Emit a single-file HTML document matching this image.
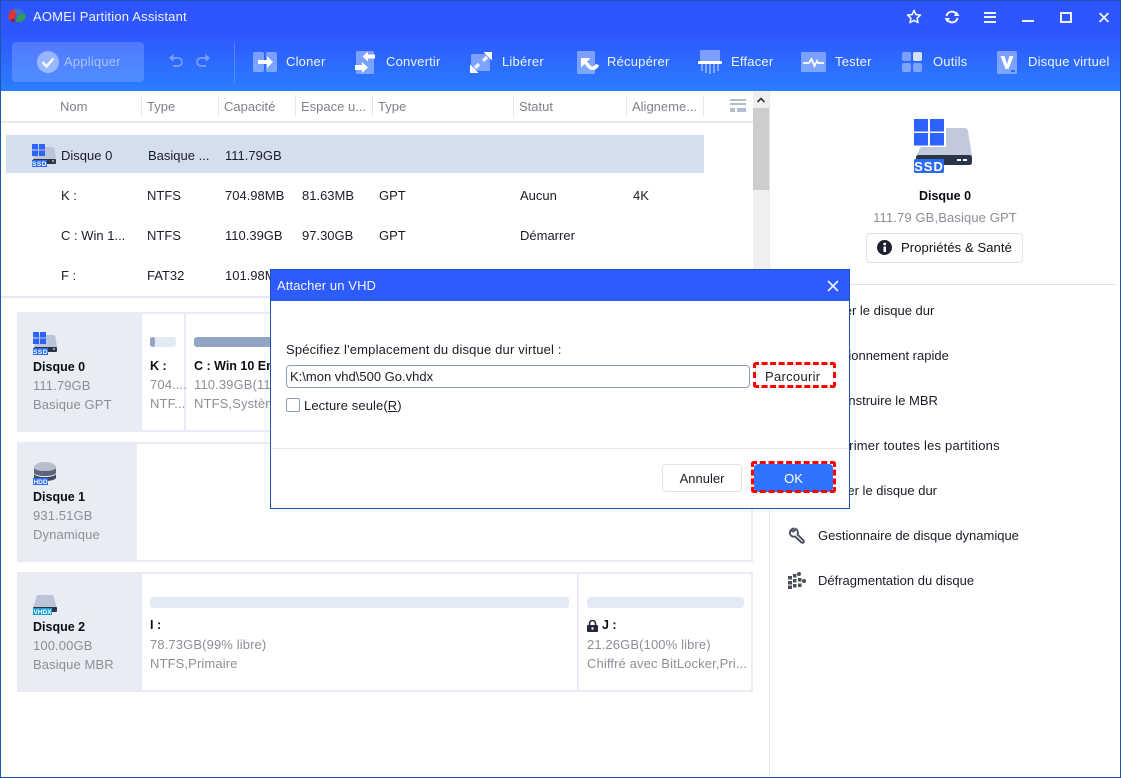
<!DOCTYPE html>
<html><head><meta charset="utf-8"><title>AOMEI Partition Assistant</title>
<style>
html,body{margin:0;padding:0;background:#fff}
#w{position:relative;width:1121px;height:778px;overflow:hidden;background:#fff;font-family:"Liberation Sans",sans-serif;font-size:13px;letter-spacing:0;color:#1c1c28}
#w div,#w svg{position:absolute}
.t{white-space:nowrap;line-height:16px;height:16px}
.h{color:#80808a}
.g{color:#8e8e98;letter-spacing:.12px}
.b{font-weight:bold;color:#0c0c16;font-size:12.5px}
.w{color:#eef3ff;letter-spacing:.2px}
.l{width:1px;top:95px;height:22px;background:#e1e7ef}
</style></head><body><div id="w">

<div style="left:0;top:0;width:1121px;height:91px;background:linear-gradient(#2e54ff 0,#2e56ff 35%,#2b7dff 100%)"></div>
<svg style="left:6px;top:6px" width="22" height="20" viewBox="0 0 22 20"><path d="M2 12C2 6 6 3 9 3l2 5-3 6H3z" fill="#d0383c"/><path d="M8 3c4-1 8 0 10 4l-6 3-2-3z" fill="#3a78c8"/><path d="M11 10l8-3c1 3 1 4 0 6l-4 3H10z" fill="#2f9a5c"/><path d="M4 13h5v3H6z" fill="#8a2a2c"/></svg>
<div class="t w" style="left:33px;top:9px">AOMEI Partition Assistant</div>

<!-- window buttons -->
<svg style="left:906px;top:9px" width="16" height="16" viewBox="0 0 16 16"><path d="M8 1.500l1.900 4.100 4.500.5-3.300 3 .9 4.500L8 11.400l-4 2.200.9-4.500-3.300-3 4.500-.5z" fill="none" stroke="#f0f4ff" stroke-width="1.600" stroke-linejoin="round"/></svg>
<svg style="left:944px;top:9px" width="16" height="16" viewBox="0 0 16 16"><path d="M2.500 7A5.500 5.500 0 0 1 12 4.500M13.500 9A5.500 5.500 0 0 1 4 11.500" fill="none" stroke="#f0f4ff" stroke-width="2"/><path d="M10 7h5.500l-2.700-4.500zM6 9H.5l2.700 4.500z" fill="#f0f4ff"/></svg>
<div style="left:984px;top:12px;width:12px;height:2px;background:#eef3ff"></div>
<div style="left:984px;top:16px;width:12px;height:2px;background:#eef3ff"></div>
<div style="left:984px;top:21px;width:12px;height:2px;background:#eef3ff"></div>
<div style="left:1022px;top:20px;width:12px;height:2px;background:#eef3ff"></div>
<div style="left:1060px;top:12px;width:8px;height:7px;border:2px solid #eef3ff"></div>
<svg style="left:1098px;top:12px" width="12" height="11" viewBox="0 0 12 11"><path d="M1.500 1l9 9M10.500 1l-9 9" stroke="#eef3ff" stroke-width="1.800"/></svg>

<!-- toolbar -->
<div style="left:12px;top:42px;width:132px;height:40px;border-radius:4px;background:rgba(255,255,255,.17)"></div>
<svg style="left:37px;top:51px" width="22" height="22" viewBox="0 0 22 22"><circle cx="11" cy="11" r="11" fill="#fff" fill-opacity=".42"/><path d="M5.500 11l4 4.500 7-8" fill="none" stroke="#fff" stroke-opacity=".85" stroke-width="2.600"/></svg>
<div class="t" style="left:64px;top:54px;color:#a9c2ff;letter-spacing:.2px">Appliquer</div>
<svg style="left:168px;top:54px" width="16" height="15" viewBox="0 0 16 15"><path d="M4 4h6a4 4 0 0 1 0 8H5" fill="none" stroke="#7ba0ff" stroke-width="1.700"/><path d="M5.500 0L1 4l4.500 4z" fill="#7ba0ff"/></svg>
<svg style="left:195px;top:54px" width="16" height="15" viewBox="0 0 16 15"><path d="M12 4H6a4 4 0 0 0 0 8h5" fill="none" stroke="#7ba0ff" stroke-width="1.700"/><path d="M10.500 0L15 4l-4.500 4z" fill="#7ba0ff"/></svg>
<div style="left:234px;top:42px;width:1px;height:40px;background:rgba(255,255,255,.2)"></div>

<svg style="left:253px;top:52px" width="24" height="20" viewBox="0 0 24 20"><rect width="11" height="20" rx="2" fill="#fff" fill-opacity=".38"/><rect x="13" width="11" height="20" rx="2" fill="#fff" fill-opacity=".38"/><path d="M5 8h9V4l6 6-6 6v-4H5z" fill="#fff"/></svg>
<div class="t w" style="left:286px;top:54px">Cloner</div>

<svg style="left:355px;top:51px" width="20" height="23" viewBox="0 0 20 23"><rect x="1" width="18" height="23" rx="1.500" fill="#fff" fill-opacity=".38"/><path d="M20 3.500h-7V.5L7.500 5.500l5.500 5v-3h7zM0 14h7v-3l6 5.500L7 22v-3H0z" fill="#fff"/></svg>
<div class="t w" style="left:386px;top:54px">Convertir</div>

<svg style="left:470px;top:52px" width="22" height="21" viewBox="0 0 22 21"><rect x="1" y="2" width="19" height="17" rx="1.500" fill="#fff" fill-opacity=".38"/><path d="M22 0v8.500L13.500 0zM0 21v-8.500L8.500 21z" fill="#fff"/><path d="M17 5l-4 4M5 16l4-4" stroke="#fff" stroke-width="3.500" stroke-opacity=".85"/></svg>
<div class="t w" style="left:502px;top:54px">Libérer</div>

<svg style="left:577px;top:51px" width="22" height="23" viewBox="0 0 22 23"><rect width="18" height="23" rx="1.500" fill="#fff" fill-opacity=".38"/><path d="M4 7h9.500L4 16.500z" fill="#fff"/><path d="M8 11l5 5.500c2 1.500 6 1 7.500-3" fill="none" stroke="#fff" stroke-width="3.500"/></svg>
<div class="t w" style="left:607px;top:54px">Récupérer</div>

<svg style="left:698px;top:50px" width="24" height="24" viewBox="0 0 24 24"><rect x="2" width="20" height="12" rx="1" fill="#fff" fill-opacity=".38"/><rect y="11" width="24" height="3" rx="1" fill="#fff"/><path d="M3 14h2v7H3zM7 14h2v9H7zM11 14h2v10h-2zM15 14h2v9h-2zM19 14h2v7h-2z" fill="#fff" fill-opacity=".4"/></svg>
<div class="t w" style="left:731px;top:54px">Effacer</div>

<svg style="left:801px;top:52px" width="25" height="20" viewBox="0 0 25 20"><rect width="25" height="20" rx="1.500" fill="#fff" fill-opacity=".38"/><path d="M2 11h6l2.500-4 3 7 2.500-5 1 2h6" fill="none" stroke="#fff" stroke-width="1.800"/></svg>
<div class="t w" style="left:835px;top:54px">Tester</div>

<svg style="left:902px;top:52px" width="20" height="20" viewBox="0 0 20 20"><rect width="9" height="9" rx="2" fill="#fff" fill-opacity=".38"/><rect x="11" width="9" height="9" rx="2" fill="#fff" fill-opacity=".8"/><rect y="11" width="9" height="9" rx="2" fill="#fff" fill-opacity=".38"/><rect x="11" y="11" width="9" height="9" rx="2" fill="#fff" fill-opacity=".38"/></svg>
<div class="t w" style="left:933px;top:54px">Outils</div>

<svg style="left:997px;top:51px" width="20" height="23" viewBox="0 0 20 23"><rect width="20" height="23" rx="1.500" fill="#fff" fill-opacity=".38"/><path d="M3.500 5h4l2.500 8 2.500-8h4L11.500 18h-3z" fill="#fff"/><rect x="14" y="19" width="4" height="2" fill="#2b6cff"/></svg>
<div class="t w" style="left:1028px;top:54px">Disque virtuel</div>

<!-- table header -->
<div class="t h" style="left:60px;top:99px">Nom</div>
<div class="t h" style="left:147px;top:99px">Type</div>
<div class="t h" style="left:224px;top:99px">Capacité</div>
<div class="t h" style="left:301px;top:99px">Espace u...</div>
<div class="t h" style="left:378px;top:99px">Type</div>
<div class="t h" style="left:519px;top:99px">Statut</div>
<div class="t h" style="left:632px;top:99px">Aligneme...</div>
<div class="l" style="left:141px"></div><div class="l" style="left:218px"></div><div class="l" style="left:295px"></div><div class="l" style="left:372px"></div><div class="l" style="left:513px"></div><div class="l" style="left:626px"></div><div class="l" style="left:703px"></div>
<div style="left:730px;top:99px;width:16px;height:2px;background:#b5bcc8"></div>
<div style="left:730px;top:103px;width:16px;height:2px;background:#b5bcc8"></div>
<div style="left:730px;top:108px;width:5px;height:4px;background:#b5bcc8"></div>
<div style="left:737px;top:108px;width:9px;height:4px;background:#aebfd6"></div>
<div style="left:0;top:121px;width:753px;height:2px;background:#e4e9f0"></div>

<!-- scrollbar -->
<div style="left:753px;top:91px;width:16px;height:205px;background:#f0f0f0"></div>
<div style="left:753px;top:108px;width:16px;height:82px;background:#cdcdcd"></div>
<svg style="left:756px;top:96px" width="10" height="8" viewBox="0 0 10 8"><path d="M1.500 6L5 2.500 8.500 6" fill="none" stroke="#333" stroke-width="1.600"/></svg>
<div style="left:769px;top:91px;width:1px;height:687px;background:#e3e7ef"></div>

<!-- rows -->
<div style="left:6px;top:135px;width:698px;height:38px;background:#d4dfee"></div>
<svg style="left:32px;top:144px" width="24" height="23" viewBox="0 0 24 23"><path d="M5 3h15q2 0 2.500 2L24 15H1z" fill="#bcc5d8"/><rect x="1" y="15" width="23" height="5" rx="1" fill="#2b3448"/><rect x="20" y="16.500" width="2" height="1" fill="#fff"/><path d="M0 0h6v5.500H0zM7 0h6v5.500H7zM0 6.500h6V12H0zM7 6.500h6V12H7z" fill="#2e62ff"/><rect y="16" width="15" height="7" fill="#2b6cf0"/><text x="7.500" y="22" font-family="Liberation Sans" font-size="6.500" font-weight="bold" fill="#fff" text-anchor="middle" letter-spacing=".5">SSD</text></svg>
<div class="t" style="left:61px;top:148px">Disque 0</div>
<div class="t" style="left:148px;top:148px">Basique ...</div>
<div class="t" style="left:225px;top:148px">111.79GB</div>

<div class="t" style="left:61px;top:188px">K :</div>
<div class="t" style="left:147px;top:188px">NTFS</div>
<div class="t" style="left:225px;top:188px">704.98MB</div>
<div class="t" style="left:302px;top:188px">81.63MB</div>
<div class="t" style="left:379px;top:188px">GPT</div>
<div class="t" style="left:520px;top:188px">Aucun</div>
<div class="t" style="left:633px;top:188px">4K</div>

<div class="t" style="left:61px;top:228px">C : Win 1...</div>
<div class="t" style="left:147px;top:228px">NTFS</div>
<div class="t" style="left:225px;top:228px">110.39GB</div>
<div class="t" style="left:302px;top:228px">97.30GB</div>
<div class="t" style="left:379px;top:228px">GPT</div>
<div class="t" style="left:520px;top:228px">Démarrer</div>

<div class="t" style="left:61px;top:268px">F :</div>
<div class="t" style="left:147px;top:268px">FAT32</div>
<div class="t" style="left:225px;top:268px">101.98MB</div>

<div style="left:0;top:296px;width:769px;height:2px;background:#e6e9f0"></div>

<!-- Disk 0 card -->
<div style="left:17px;top:312px;width:732px;height:116px;border:2px solid #e9ecf4"></div>
<div style="left:17px;top:312px;width:125px;height:120px;background:#e9ecf4"></div>
<div style="left:184px;top:312px;width:2px;height:120px;background:#e9ecf4"></div>
<svg style="left:33px;top:332px" width="24" height="23" viewBox="0 0 24 23"><path d="M5 3h15q2 0 2.500 2L24 15H1z" fill="#bcc5d8"/><rect x="1" y="15" width="23" height="5" rx="1" fill="#2b3448"/><rect x="20" y="16.500" width="2" height="1" fill="#fff"/><path d="M0 0h6v5.500H0zM7 0h6v5.500H7zM0 6.500h6V12H0zM7 6.500h6V12H7z" fill="#2e62ff"/><rect y="16" width="15" height="7" fill="#2b6cf0"/><text x="7.500" y="22" font-family="Liberation Sans" font-size="6.500" font-weight="bold" fill="#fff" text-anchor="middle" letter-spacing=".5">SSD</text></svg>
<div class="t b" style="left:33px;top:359px">Disque 0</div>
<div class="t g" style="left:33px;top:378px">111.79GB</div>
<div class="t g" style="left:33px;top:397px">Basique GPT</div>
<div style="left:150px;top:337px;width:26px;height:10px;border-radius:3px;background:#e3eaf4"></div>
<div style="left:150px;top:337px;width:5px;height:10px;border-radius:3px;background:#91a6c4"></div>
<div class="t b" style="left:150px;top:358px">K :</div>
<div class="t g" style="left:150px;top:377px">704....</div>
<div class="t g" style="left:150px;top:396px">NTF...</div>
<div style="left:194px;top:337px;width:100px;height:10px;border-radius:3px;background:#91a6c4"></div>
<div class="t b" style="left:194px;top:358px">C : Win 10 Ent</div>
<div class="t g" style="left:194px;top:377px">110.39GB(11%</div>
<div class="t g" style="left:194px;top:396px">NTFS,Système</div>

<!-- Disk 1 card -->
<div style="left:17px;top:442px;width:732px;height:116px;border:2px solid #e9ecf4"></div>
<div style="left:17px;top:442px;width:120px;height:120px;background:#e9ecf4"></div>
<svg style="left:33px;top:462px" width="24" height="23" viewBox="0 0 24 23"><ellipse cx="12" cy="5.500" rx="11" ry="5.500" fill="#b8bfcc"/><path d="M1 6c2 4 20 4 22 0v5c-2 4-20 4-22 0z" fill="#5b6478"/><path d="M1 12c2 4 20 4 22 0v4c-2 4-20 4-22 0z" fill="#3f4a5e"/><rect y="16" width="15" height="7" fill="#2b6cf0"/><text x="7.500" y="22" font-family="Liberation Sans" font-size="6.500" font-weight="bold" fill="#fff" text-anchor="middle">HDD</text></svg>
<div class="t b" style="left:33px;top:489px">Disque 1</div>
<div class="t g" style="left:33px;top:508px">931.51GB</div>
<div class="t g" style="left:33px;top:527px">Dynamique</div>

<!-- Disk 2 card -->
<div style="left:17px;top:572px;width:732px;height:116px;border:2px solid #e9ecf4"></div>
<div style="left:17px;top:572px;width:125px;height:120px;background:#e9ecf4"></div>
<div style="left:577px;top:572px;width:2px;height:120px;background:#e9ecf4"></div>
<svg style="left:33px;top:595px" width="24" height="20" viewBox="0 0 24 20"><path d="M4 0h16l4 13H0z" fill="#bcc5d8"/><rect y="12" width="24" height="5" rx="1" fill="#2b3448"/><rect y="13" width="19" height="7" fill="#1aa0d8"/><text x="9.500" y="19" font-family="Liberation Sans" font-size="6.500" font-weight="bold" fill="#fff" text-anchor="middle">VHDX</text></svg>
<div class="t b" style="left:33px;top:619px">Disque 2</div>
<div class="t g" style="left:33px;top:638px">100.00GB</div>
<div class="t g" style="left:33px;top:657px">Basique MBR</div>
<div style="left:150px;top:597px;width:419px;height:11px;border-radius:3px;background:#e3eaf4"></div>
<div class="t b" style="left:150px;top:617px">I :</div>
<div class="t g" style="left:150px;top:637px">78.73GB(99% libre)</div>
<div class="t g" style="left:150px;top:656px">NTFS,Primaire</div>
<div style="left:587px;top:597px;width:157px;height:11px;border-radius:3px;background:#e3eaf4"></div>
<svg style="left:587px;top:620px" width="11" height="12" viewBox="0 0 11 12"><path d="M2.500 5V3.500a3 3 0 0 1 6 0V5" fill="none" stroke="#20283a" stroke-width="1.600"/><rect y="5" width="11" height="7" rx="1" fill="#20283a"/><circle cx="5.500" cy="8.500" r="1.200" fill="#fff"/></svg>
<div class="t b" style="left:602px;top:617px">J :</div>
<div class="t g" style="left:587px;top:637px">21.26GB(100% libre)</div>
<div class="t g" style="left:587px;top:656px">Chiffré avec BitLocker,Pri...</div>

<!-- right panel -->
<svg style="left:914px;top:119px" width="58" height="54" viewBox="0 0 58 54"><path d="M20 9H51q2.500 0 3 3L58 37H2L8 26H20z" fill="#c2c9da"/><rect x="2" y="36" width="56" height="10" rx="2.500" fill="#2b3448"/><rect x="43" y="40" width="4" height="2" fill="#fff"/><rect x="49" y="40" width="4" height="2" fill="#fff"/><rect x="-1" y="-1" width="33" height="29" fill="#fff"/><path d="M0 0h14v12.500H0zM16 0h14v12.500H16zM0 14h14v12.500H0zM16 14h14v12.500H16z" fill="#2e62ff"/><rect y="40" width="30" height="14" rx="1.500" fill="#2b6cf0"/><text x="15" y="52" font-family="Liberation Sans" font-size="13" font-weight="bold" fill="#fff" text-anchor="middle" letter-spacing="1">SSD</text></svg>
<div class="t b" style="left:870px;top:188px;width:150px;text-align:center">Disque 0</div>
<div class="t g" style="left:850px;top:210px;width:190px;text-align:center">111.79 GB,Basique GPT</div>
<div style="left:866px;top:233px;width:155px;height:28px;border:1px solid #dfe5f0;border-radius:4px"></div>
<svg style="left:877px;top:240px" width="15" height="15" viewBox="0 0 15 15"><circle cx="7.500" cy="7.500" r="7.500" fill="#1e2230"/><rect x="6.500" y="6.500" width="2.500" height="5.500" fill="#fff"/><circle cx="7.700" cy="4" r="1.400" fill="#fff"/></svg>
<div class="t" style="left:901px;top:240px;color:#111;letter-spacing:.1px">Propriétés &amp; Santé</div>
<div style="left:770px;top:284px;width:345px;height:1px;background:#dde3f0"></div>
<div class="t" style="left:818px;top:303px">Cloner le disque dur</div>
<div class="t" style="left:818px;top:348px">Partitionnement rapide</div>
<div class="t" style="left:818px;top:393px">Reconstruire le MBR</div>
<div class="t" style="left:818px;top:438px;letter-spacing:.2px">Supprimer toutes les partitions</div>
<div class="t" style="left:818px;top:483px">Effacer le disque dur</div>
<div class="t" style="left:818px;top:528px">Gestionnaire de disque dynamique</div>
<div class="t" style="left:818px;top:573px">Défragmentation du disque</div>
<svg style="left:788px;top:527px" width="18" height="17" viewBox="0 0 18 17"><path d="M6.500 1.500a4.500 4.500 0 0 0-4.500 5.500 4 4 0 0 0 5 2.500l6.500 6c1.500 1 3-.5 2-2L9.500 7.500A4.500 4.500 0 0 0 8 2L5.500 4.500 3.500 4" fill="none" stroke="#4a4f5c" stroke-width="1.900"/></svg>
<svg style="left:788px;top:572px" width="18" height="17" viewBox="0 0 18 17"><g fill="#4a4f5c"><rect y="4" width="4" height="3.500"/><rect x="5" y="2" width="3.500" height="3.500"/><circle cx="11" cy="2" r="2"/><rect y="9" width="4" height="3.500"/><rect x="5" y="7" width="3.500" height="3.500"/><rect x="10" y="6" width="3.500" height="3.500"/><circle cx="16" cy="9" r="2"/><rect y="13.500" width="4" height="3.500"/><rect x="5" y="12" width="3.500" height="3.500"/><rect x="10" y="11.500" width="3.500" height="3.500"/></g></svg>

<!-- outer border -->
<div style="left:0;top:0;width:1121px;height:1px;background:#1a56b0"></div>
<div style="left:0;top:0;width:1px;height:778px;background:#1a56b0"></div>
<div style="left:1120px;top:0;width:1px;height:778px;background:#1a56b0"></div>
<div style="left:0;top:777px;width:1121px;height:1px;background:#1a56b0"></div>

<!-- dialog -->
<div style="left:270px;top:269px;width:578px;height:238px;border:1px solid #1a56b0;background:#fff;box-sizing:content-box"></div>
<div style="left:271px;top:270px;width:578px;height:31px;background:#2e5bff"></div>
<div class="t" style="left:277px;top:278px;color:#f2f5ff;letter-spacing:.1px">Attacher un VHD</div>
<svg style="left:827px;top:280px" width="12" height="12" viewBox="0 0 12 12"><path d="M1 1l10 10M11 1L1 11" stroke="#eef3ff" stroke-width="1.600"/></svg>
<div class="t" style="left:286px;top:342px;letter-spacing:.17px">Spécifiez l'emplacement du disque dur virtuel :</div>
<div style="left:286px;top:365px;width:462px;height:21px;border:1px solid #8f9db5;border-radius:4px;background:#fff"></div>
<div class="t" style="left:290px;top:369px">K:\mon vhd\500 Go.vhdx</div>
<div style="left:755px;top:364px;width:77px;height:22px;border:1px solid #dfe3ea"></div>
<div style="left:753px;top:362px;width:77px;height:20px;border:3px dashed #f00;border-radius:3px;box-sizing:content-box"></div>
<div class="t" style="left:765px;top:369px;letter-spacing:.3px">Parcourir</div>
<div style="left:286px;top:398px;width:12px;height:12px;border:1px solid #8f9db5;border-radius:2px;background:#fff"></div>
<div class="t" style="left:304px;top:398px;letter-spacing:.1px">Lecture seule(<u>R</u>)</div>
<div style="left:271px;top:448px;width:578px;height:1px;background:#e6e8ee"></div>
<div style="left:662px;top:464px;width:78px;height:26px;border:1px solid #dfe3ea;border-radius:4px;background:#fff"></div>
<div class="t" style="left:662px;top:471px;width:80px;text-align:center">Annuler</div>
<div style="left:754px;top:464px;width:79px;height:28px;border-radius:4px;background:#2f73ff"></div>
<div style="left:751px;top:461px;width:79px;height:26px;border:3px dashed #f00;border-radius:3px;box-sizing:content-box"></div>
<div class="t" style="left:754px;top:471px;width:79px;text-align:center;color:#fff">OK</div>

</div></body></html>
